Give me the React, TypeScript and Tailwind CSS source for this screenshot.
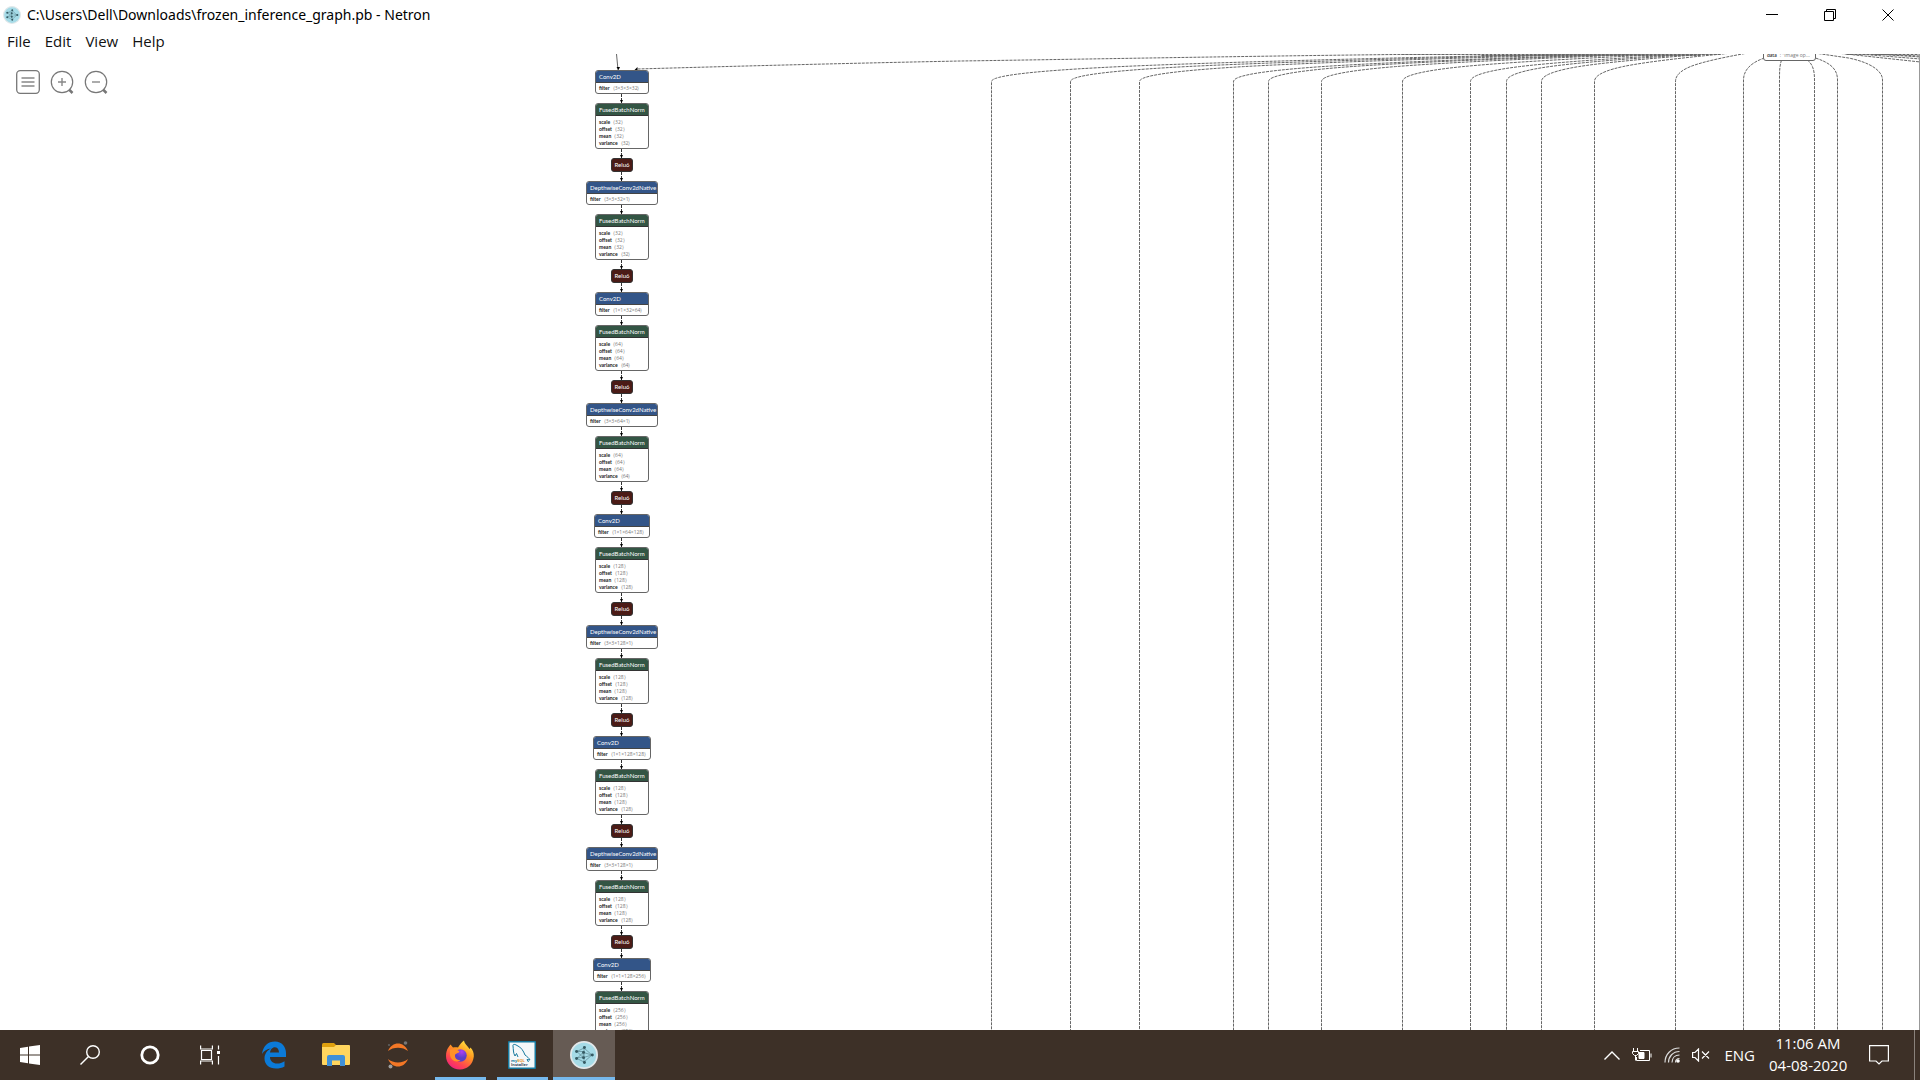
import React from "react";

type Op = "conv" | "depthwise";
type Stage = { op: Op; filter: string; size: string };

const stages: Stage[] = [
  { op: "conv", filter: "3×3×3×32", size: "32" },
  { op: "depthwise", filter: "3×3×32×1", size: "32" },
  { op: "conv", filter: "1×1×32×64", size: "64" },
  { op: "depthwise", filter: "3×3×64×1", size: "64" },
  { op: "conv", filter: "1×1×64×128", size: "128" },
  { op: "depthwise", filter: "3×3×128×1", size: "128" },
  { op: "conv", filter: "1×1×128×128", size: "128" },
  { op: "depthwise", filter: "3×3×128×1", size: "128" },
  { op: "conv", filter: "1×1×128×256", size: "256" },
];

function Row({ name, value }: { name: string; value: string }) {
  return (
    <div className="flex h-[7px] items-center gap-[3px] whitespace-pre text-[5px] leading-[7px]">
      <span className="font-['Lato'] font-bold text-[#222]">{name}</span>
      <span className="text-[#777]">{"⟨" + value + "⟩"}</span>
    </div>
  );
}

function Arrow() {
  return (
    <svg width="8" height="9" className="block shrink-0">
      <path d="M3.5 0V9" stroke="#333" strokeDasharray="3 1" />
      <path d="M2 6h3L3.5 9z" fill="#000" />
    </svg>
  );
}

function OpNode({ stage }: { stage: Stage }) {
  const wide = stage.op === "depthwise";
  const width = wide ? "w-[72px]" : stage.filter.length > 10 ? "w-[58px]" : stage.filter.length > 9 ? "w-[56px]" : "w-[54px]";
  return (
    <div className={"h-6 shrink-0 overflow-hidden rounded-[3px] border border-[#666] bg-white " + width}>
      <div className="h-3 border-b border-[#444] bg-[#335588] px-[3px] font-['Lato'] text-[6px] leading-[12px] text-white">
        {wide ? "DepthwiseConv2dNative" : "Conv2D"}
      </div>
      <div className="px-[3px] pt-[2px]">
        <Row name="filter" value={stage.filter} />
      </div>
    </div>
  );
}

function BatchNormNode({ size }: { size: string }) {
  return (
    <div className="h-[46px] w-[54px] shrink-0 overflow-hidden rounded-[3px] border border-[#666] bg-white">
      <div className="h-3 border-b border-[#333] bg-[#335544] px-[3px] font-['Lato'] text-[6px] leading-[12px] text-white">
        FusedBatchNorm
      </div>
      <div className="px-[3px] pt-[3px]">
        {["scale", "offset", "mean", "variance"].map((n) => (
          <Row key={n} name={n} value={size} />
        ))}
      </div>
    </div>
  );
}

const leftColumns = [991, 1070, 1139, 1233, 1268, 1321, 1402, 1470, 1506, 1541, 1594, 1675];

function fanPath(x: number) {
  const ax = 1764;
  const ay = 50;
  const by = 66;
  const at = (k: number) => `${ax + (x - ax) * k} ${ay + (by - ay) * k}`;
  return `M${ax} ${ay}L${at(1 / 6)}C${at(1 / 3)} ${at(2 / 3)} ${ax + (x - ax) * (5 / 6)} 66.6C${x} 72.7 ${x} 79.3 ${x} 82V1040`;
}

function Edges() {
  return (
    <svg className="pointer-events-none absolute inset-0 h-full w-full" fill="none" stroke="#666" aria-hidden="true">
      <g transform="translate(.5 -54)">
        <g strokeDasharray="3 1">
          {leftColumns.map((x) => (
            <path key={x} d={fanPath(x)} />
          ))}
          <path d="M1500 53.5C1300 55 1100 59 960 61C860 63 740 66 637 69" />
          <path d="M1720 54.5H1400" />
          <path d="M1700 55.5H1480" />
          <path d="M1764 58C1752 62 1743 69 1743 80V1040" />
          <path d="M1781 60C1779 66 1779 72 1779 80V1040" />
          <path d="M1807 60C1813 65 1814 72 1814 80V1040" />
          <path d="M1815 58C1830 63 1837 69 1837 80V1040" />
          <path d="M1814 53L1848 58C1868 62 1882 70 1882 80V1040" />
          <path d="M1836 53L1920 62" />
          <path d="M1846 53L1920 59" />
          <path d="M1860 53L1920 57" />
          <path d="M1872 54L1920 56" />
          <path d="M1846 54.5H1920" />
        </g>
        <path d="M616 54L617.5 70" />
        <path d="M616 67h3.500L618 70z" fill="#000" stroke="none" />
        <path d="M634 70l3-3v3z" fill="#000" stroke="none" />
      </g>
    </svg>
  );
}

function NetronLogo({ size }: { size: number }) {
  const pts = [
    [7, 12], [7, 20], [16, 7.5], [15, 13], [15, 19], [16, 24.5], [25, 16],
  ];
  return (
    <svg width={size} height={size} viewBox="0 0 32 32" aria-hidden="true">
      <circle cx="16" cy="16" r="15" fill="#a5dbe7" stroke="#e2e8ea" strokeWidth="2" />
      <path
        d="M8 12L16 8L25 16L16 24L8 20L15 13L25 16L15 19L8 12M16 8V24M8 12H15V19H8"
        fill="none"
        stroke="#5b8790"
        strokeWidth=".8"
      />
      {pts.map(([x, y]) => (
        <circle key={x + "-" + y} cx={x + 0.5} cy={y} r="1.7" fill="#355a63" />
      ))}
    </svg>
  );
}

function TitleBar() {
  const btn = "flex h-[30px] w-[58px] items-center justify-center";
  return (
    <header className="flex h-[29px] shrink-0 items-center">
      <div className="flex flex-1 items-center gap-[6px] pl-[3px]">
        <NetronLogo size={18} />
        <h1 className="font-['Noto_Sans'] text-[14px] leading-5 whitespace-nowrap text-black">
          C:\Users\Dell\Downloads\frozen_inference_graph.pb - Netron
        </h1>
      </div>
      <div className="flex pr-[3px]">
        <button className={btn} aria-label="Minimize">
          <svg width="12" height="12" stroke="#000"><path d="M0 5.500h12" /></svg>
        </button>
        <button className={btn} aria-label="Restore">
          <svg width="12" height="12" fill="none" stroke="#000"><path d="M.5 2.500h9v9h-9zM2.500 2.500v-2h9v9h-2" /></svg>
        </button>
        <button className={btn} aria-label="Close">
          <svg width="12" height="12" stroke="#000"><path d="M.5 .5l11 11M11.500 .5l-11 11" /></svg>
        </button>
      </div>
    </header>
  );
}

function Zoom({ plus }: { plus?: boolean }) {
  return (
    <svg width="24" height="24" fill="none" stroke="#777" strokeWidth="1.200">
      <circle cx="12" cy="12" r="10.700" />
      <path d="M19 19.500l3.500 3.500" strokeWidth="2.500" />
      <path d={plus ? "M8 12h8M12 8v8" : "M8 12h8"} stroke="#888" strokeWidth="1.400" />
    </svg>
  );
}

function Taskbar() {
  const sys = "flex w-[60px] items-center justify-center";
  const app = "relative flex w-[62px] items-center justify-center";
  return (
    <footer className="flex h-[50px] shrink-0 bg-[#3d3027] text-white">
      <button className={sys} aria-label="Start">
        <svg width="20" height="20" fill="#fff"><path d="M0 3l8-1.200V9.500H0zM9 1.600L20 0v9.500H9zM0 10.500h8v7.700L0 17zM9 10.500h11V20L9 18.400z" /></svg>
      </button>
      <button className={sys} aria-label="Search">
        <svg width="20" height="20" fill="none" stroke="#fff" strokeWidth="1.400"><circle cx="13" cy="7" r="6.300" /><path d="M8.500 11.500L.5 19.500" /></svg>
      </button>
      <button className={sys} aria-label="Cortana">
        <svg width="20" height="20" fill="none" stroke="#fff" strokeWidth="2.800"><circle cx="10" cy="10" r="8.200" /></svg>
      </button>
      <button className={sys + " mr-[3px]"} aria-label="Task View">
        <svg width="20" height="20" fill="none" stroke="#fff" strokeWidth="1.200"><path d="M.6 .5v3.500H12.400V.5M.6 19.500v-3.500H12.400v3.500M1.500 5.500h10v9h-10zM18.500 .5v4M18.500 11v8.500" /><path d="M17 6h3v3h-3z" fill="#fff" stroke="none" /></svg>
      </button>
      <button className={app} aria-label="Edge">
        <svg width="26" height="28" viewBox="0 0 26 28" fill="#0b7ad8">
          <path d="M1 13C2 5 7 .5 14 .5C21 .5 25 6 25 12V16H9C9 20 12 22.500 16 22.500C19 22.500 21 21.600 23.500 20.200V25.500C21 27 18 27.500 15 27.500C8 27.500 3.500 23.500 3.500 17.500C3.500 13 6 9.500 10 7.500C6 7.800 3 9.800 1 13ZM9 11.500H18C18 8 16 6.200 13.800 6.200C11.300 6.200 9.400 8.500 9 11.500Z" />
        </svg>
      </button>
      <button className={app} aria-label="File Explorer">
        <svg width="28" height="24" viewBox="0 0 28 24">
          <path d="M0 1.500Q0 0 1.500 0H12L14 2V6H0z" fill="#dfa00f" />
          <path d="M0 4H12L14 2H27Q28 2 28 3V21Q28 22 27 22H1Q0 22 0 21z" fill="#ffd55e" />
          <path d="M5 23V14Q5 12 7 12H21Q23 12 23 14V23H18V17.500H10V23z" fill="#3f90d8" />
        </svg>
      </button>
      <button className={app} aria-label="Jupyter">
        <svg width="24" height="30" viewBox="0 0 24 30">
          <path d="M2 11C6 1 18 1 22 11C17 6.500 7 6.500 2 11Z" fill="#f37726" />
          <path d="M2 19C6 29 18 29 22 19C17 23.500 7 23.500 2 19Z" fill="#f37726" />
          <circle cx="19.500" cy="3" r="1.800" fill="#767677" /><circle cx="3" cy="5" r="1.100" fill="#616262" /><circle cx="4.500" cy="26.500" r="2" fill="#9e9e9e" />
        </svg>
      </button>
      <button className={app} aria-label="Firefox">
        <svg width="30" height="30" viewBox="0 0 30 30">
          <defs>
            <linearGradient id="fox" x1=".85" y1="0" x2=".25" y2="1"><stop offset="0" stopColor="#fff04a" /><stop offset=".4" stopColor="#ff9a1f" /><stop offset=".75" stopColor="#ff4550" /><stop offset="1" stopColor="#ee2080" /></linearGradient>
            <radialGradient id="globe" cx=".6" cy=".2"><stop offset="0" stopColor="#b040f0" /><stop offset="1" stopColor="#5a3fc8" /></radialGradient>
          </defs>
          <path d="M3 8L5.500 4.500L8 7.500C10 7 12 7.200 13 7.600C14.500 4.500 17 2 19 .5C19.500 4 23 6 24.500 9L25.500 7.500C28 10 29 13 28.800 16.500C28 24.500 22 29.500 15 29.500C7 29.500 1 23.500 1 16C1 12.500 1.800 10 3 8Z" fill="url(#fox)" />
          <circle cx="15.500" cy="15.500" r="6.200" fill="url(#globe)" />
          <path d="M5 9.500C9 8 12.500 9.500 14.500 11.500C13.500 13.500 10.500 13.200 10 15C9.500 18.500 12.500 20.500 15.500 20C11 23.500 5.500 20 5 15Z" fill="#ff9128" />
        </svg>
        <span className="absolute bottom-0 h-[3px] w-[51px] bg-[#76b9ed]" />
      </button>
      <button className={app} aria-label="MySQL Installer">
        <svg width="28" height="28" viewBox="0 0 28 28">
          <rect width="28" height="28" rx="1" fill="#16799e" /><rect x="1.500" y="1.500" width="25" height="25" fill="#f5f8f9" />
          <path d="M7 15C5 12 5.500 8 5 5C4.500 3 7 3 9 4.500C13 6 15.500 10 17 14C19 15.500 21 17 22 19L19 18.500L20.500 21M7 15L8.500 12.500L10 16" fill="none" stroke="#16799e" />
          <text x="3" y="20.500" fontSize="4" fontWeight="700" fontFamily="Open Sans" fill="#16799e">my<tspan fill="#e8912d">SQL</tspan></text>
          <text x="3" y="25" fontSize="4" fontWeight="700" fontFamily="Open Sans" fill="#345">Installer</text>
        </svg>
        <span className="absolute bottom-0 h-[3px] w-[51px] bg-[#76b9ed]" />
      </button>
      <button className={app + " bg-[#665b54]"} aria-label="Netron">
        <NetronLogo size={28} />
        <span className="absolute bottom-0 h-[3px] w-full bg-[#76b9ed]" />
      </button>
      <div className="ml-auto flex items-center">
        <button aria-label="Show hidden icons" className="mr-3">
          <svg width="16" height="9" fill="none" stroke="#fff" strokeWidth="1.400"><path d="M.5 8.500L8 1l7.500 7.500" /></svg>
        </button>
        <button aria-label="Battery" className="mr-3">
          <svg width="20" height="14" fill="none" stroke="#fff"><path d="M8 2.500H17.500v10H4.500V9M19 5.500v4M1.500 0v3M5.500 0v3M.5 3.500h6v2l-2 2h-2l-2-2zM3.500 7v5.500" /><path d="M7 4.500h5v6H7z" fill="#fff" /></svg>
        </button>
        <button aria-label="Wi-Fi" className="mr-3">
          <svg width="16" height="16" fill="none" stroke="#ddd" strokeWidth="1.200"><path d="M1 15.500C1 7.500 7 1 15.500 1M4.500 15.500C4.500 9.500 9 4.500 15.500 4.500M8 15.500C8 11 11 8 15.500 8" /><path d="M11.500 15.500C11.500 13 13 11.500 15.500 11.500" /><circle cx="14" cy="14" r="1.800" fill="#fff" stroke="none" /></svg>
        </button>
        <button aria-label="Volume muted" className="mr-[14px]">
          <svg width="18" height="14" fill="none" stroke="#fff" strokeWidth="1.200"><path d="M.6 4.500H3L6.500 1V13L3 9.500H.6zM10 3.500l7 7M17 3.500l-7 7" /></svg>
        </button>
        <button className="text-[15px] leading-5">ENG</button>
        <button className="mr-4 mb-[2px] ml-[14px] w-[78px] text-center text-[15px] leading-[22px] whitespace-nowrap">
          11:06 AM
          <br />
          04-08-2020
        </button>
        <button aria-label="Notifications" className="mr-[25px] ml-[6px]">
          <svg width="20" height="20" fill="none" stroke="#fff" strokeWidth="1.200"><path d="M.6 .6h18.800v15.400H13l-3 3-3-3H.6z" /></svg>
        </button>
        <button aria-label="Show desktop" className="h-[50px] w-[6px] border-l border-[#8a827c]" />
      </div>
    </footer>
  );
}

export default function App() {
  return (
    <div className="flex h-screen flex-col overflow-hidden bg-white font-['Open_Sans','Noto_Sans',sans-serif]">
      <TitleBar />
      <nav className="flex h-[25px] shrink-0 items-center gap-[14px] pb-[2px] pl-[7px] text-[15px] leading-5 text-[#111]">
        {["File", "Edit", "View", "Help"].map((m) => (
          <button key={m}>{m}</button>
        ))}
      </nav>
      <main className="relative min-h-0 flex-1 overflow-hidden border-r border-[#999]">
        <Edges />
        <div className="absolute top-4 left-[586px] flex w-[72px] flex-col items-center">
          {stages.map((s, i) => (
            <React.Fragment key={i}>
              <OpNode stage={s} />
              <Arrow />
              <BatchNormNode size={s.size} />
              <Arrow />
              <div className="h-[14px] w-[22px] shrink-0 rounded-[3px] border border-[#333] bg-[#4b1b16] text-center font-['Lato'] text-[6px] leading-[12px] text-white">
                Relu6
              </div>
              <Arrow />
            </React.Fragment>
          ))}
        </div>
        <div className="absolute -top-[5px] left-[1763px] h-3 w-[53px] overflow-hidden rounded-b-[3px] border border-[#666] bg-white pt-[2px] pl-[3px]">
          <div className="flex h-[7px] gap-[3px] text-[5px] leading-[7px] whitespace-nowrap">
            <span className="font-['Lato'] font-bold text-[#444]">data</span>
            <span className="text-[#777]">: "image op...</span>
          </div>
        </div>
        <div className="absolute top-4 left-4 flex gap-[10px]">
          <button aria-label="Menu">
            <svg width="24" height="24" fill="none" stroke="#777" strokeWidth="1.300"><rect x=".7" y=".7" width="22.600" height="22.600" rx="3.500" /><path d="M5.500 8h13M5.500 12h13M5.500 16h13" stroke="#888" /></svg>
          </button>
          <button aria-label="Zoom in"><Zoom plus /></button>
          <button aria-label="Zoom out"><Zoom /></button>
        </div>
      </main>
      <Taskbar />
    </div>
  );
}
